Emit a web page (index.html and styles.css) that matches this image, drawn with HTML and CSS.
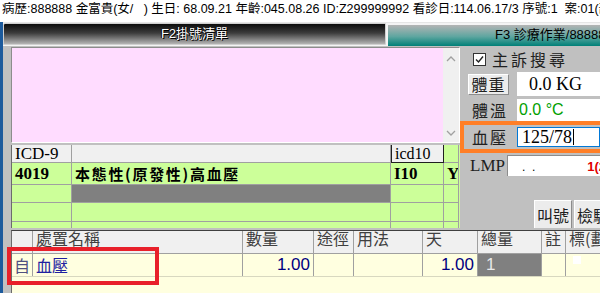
FILE: index.html
```html
<!DOCTYPE html>
<html lang="zh-Hant">
<head>
  <meta charset="UTF-8" />
  <title>診療作業</title>
  <link rel="stylesheet" href="styles.css">
</head>
<body>
  <div class="patient">病歷:888888 金富貴(女/   ) 生日: 68.09.21 年齡:045.08.26 ID:Z299999992 看診日:114.06.17/3 序號:1  案:01(部</div>

  <div class="frame">
    <div class="edge"></div>
    <div class="content">
      <div class="tabs">
        <div class="tab tab-dark">F2掛號清單</div>
        <div class="tab tab-teal">F3 診療作業/888888(</div>
      </div>

      <div class="work">
        <div class="upper">
          <div class="left-col">
            <div class="memo">
              <div class="memo-text"></div>
              <div class="scroll">
                <svg width="10" height="6" viewBox="0 0 10 6"><path d="M1 5 L5 1 L9 5" fill="none" stroke="#a0a0a0" stroke-width="1.3"/></svg>
                <svg width="10" height="6" viewBox="0 0 10 6"><path d="M1 1 L5 5 L9 1" fill="none" stroke="#a0a0a0" stroke-width="1.3"/></svg>
              </div>
            </div>

            <div class="icd">
              <div class="cell head">ICD-9</div>
              <div class="cell head"></div>
              <div class="cell head head-sel">icd10</div>
              <div class="cell"></div>

              <div class="cell code">4019</div>
              <div class="cell name">本態性(原發性)高血壓</div>
              <div class="cell code">I10</div>
              <div class="cell code">Y</div>

              <div class="cell"></div>
              <div class="cell dim"></div>
              <div class="cell"></div>
              <div class="cell"></div>

              <div class="cell"></div>
              <div class="cell"></div>
              <div class="cell"></div>
              <div class="cell"></div>

              <div class="cell last"></div>
              <div class="cell last"></div>
              <div class="cell last"></div>
              <div class="cell last"></div>
            </div>
          </div>

          <div class="side">
            <label class="search"><span class="check">
              <svg width="11" height="11" viewBox="0 0 11 11"><path d="M2 5.5 L4.5 8 L9 2.5" fill="none" stroke="#222" stroke-width="1.4"/></svg>
            </span>主訴搜尋</label>

            <div class="vital weight">
              <button class="vbtn">體重</button>
              <div class="field">0.0 KG</div>
            </div>
            <div class="vital temp">
              <span class="vlabel">體溫</span>
              <div class="field green">0.0 °C</div>
            </div>
            <div class="vital bp">
              <span class="vlabel">血壓</span>
              <div class="field focus">125/78<span class="caret"></span></div>
            </div>
            <div class="vital lmp">
              <span class="vlabel latin">LMP</span>
              <div class="field small"><span class="dots">.&nbsp;&nbsp;.</span><span class="red">1(2</span></div>
            </div>

            <div class="actions">
              <button class="act">叫號</button>
              <button class="act">檢驗</button>
            </div>
          </div>
        </div>

        <div class="orders">
          <div class="orow ohead">
            <div class="oc c0"></div>
            <div class="oc c1">處置名稱</div>
            <div class="oc c2">數量</div>
            <div class="oc c3">途徑</div>
            <div class="oc c4">用法</div>
            <div class="oc c5">天</div>
            <div class="oc c6">總量</div>
            <div class="oc c7">註</div>
            <div class="oc c8">標(劃</div>
          </div>
          <div class="orow odata">
            <div class="oc c0 self">自</div>
            <div class="oc c1 item">血壓</div>
            <div class="oc c2 num">1.00</div>
            <div class="oc c3"></div>
            <div class="oc c4"></div>
            <div class="oc c5 num">1.00</div>
            <div class="oc c6 total">1</div>
            <div class="oc c7"></div>
            <div class="oc c8"><span class="box"></span></div>
          </div>
        </div>
      </div>
    </div>
  </div>

  <div class="mark"></div>
</body>
</html>
```

FILE: styles.css
```css
body {
  margin: 0;
  width: 600px;
  height: 293px;
  overflow: hidden;
  background: #fff;
  font-family: "Liberation Sans", "Noto Sans CJK TC", sans-serif;
  position: relative;
}

.patient {
  height: 22px;
  padding-left: 2px;
  font-size: 12.5px;
  line-height: 19px;
  white-space: pre;
  overflow: hidden;
  color: #000;
}

.frame {
  display: flex;
  height: 271px;
}

.edge {
  width: 3px;
  background: #1c5a9c;
  flex: none;
}

.content {
  flex: 1;
  display: flex;
  flex-direction: column;
  min-width: 0;
}

/* tab strip */
.tabs {
  height: 24px;
  display: flex;
  align-items: flex-end;
  border-top: 1px solid #e6e6e6;
  box-sizing: border-box;
  background: #f4f4f4;
}

.tab {
  font-size: 13px;
  white-space: nowrap;
  overflow: hidden;
  box-sizing: border-box;
}

.tab-dark {
  width: 383px;
  height: 22px;
  margin-bottom: 1px;
  line-height: 20px;
  text-align: center;
  color: #fff;
  text-shadow: 1px 1px 0 #000, -1px 0 0 #000;
  background: linear-gradient(#0c0c0c, #3c3c3c 45%, #b4b4b4);
  border: 1px solid #d0d0d0;
  border-radius: 2px 0 0 0;
}

.tab-teal {
  flex: 1;
  margin-left: 2px;
  height: 21px;
  padding-left: 107px;
  line-height: 20px;
  color: #000;
  background: linear-gradient(#b4b4b4, #5ea6a0 55%, #008078);
}

/* working area */
.work {
  flex: 1;
  background: #c0c0c0;
  display: flex;
  flex-direction: column;
}

.upper {
  height: 184px;
  display: flex;
}

.left-col {
  width: 457px;
  padding: 1px 0 0 8px;
  box-sizing: border-box;
  display: flex;
  flex-direction: column;
  gap: 2px;
}

.memo {
  height: 96px;
  display: flex;
  border: 1px solid #8c8c8c;
  border-right-color: #fff;
  border-bottom-color: #fff;
  box-sizing: border-box;
}

.memo-text {
  flex: 1;
  background: #ffdcff;
}

.scroll {
  width: 16px;
  background: #f0f0f0;
  display: flex;
  flex-direction: column;
  justify-content: space-between;
  align-items: center;
  padding: 8px 0 6px;
  box-sizing: border-box;
}

/* diagnosis grid */
.icd {
  display: grid;
  grid-template-columns: 60px 319px 53px 15px;
  grid-template-rows: 18px 22px 18px 19px 6px;
  border-left: 1px solid #6c6c6c;
  background: #ccff99;
}

.cell {
  border-right: 1px solid #a0a0a0;
  border-bottom: 1px solid #a0a0a0;
  font-family: "Liberation Serif", "Noto Sans CJK TC", serif;
  font-size: 17px;
  line-height: 19px;
  padding-left: 3px;
  overflow: hidden;
  white-space: nowrap;
  color: #000;
}

.cell.last {
  border-bottom: none;
}

.head {
  background: #f0f0f0;
  line-height: 17px;
}

.head-sel {
  border: 1px solid #202020;
  border-top: none;
  font-size: 16px;
}

.code {
  font-weight: bold;
  line-height: 22px;
}

.name {
  font-family: "Noto Sans CJK TC", sans-serif;
  font-weight: bold;
  font-size: 15px;
  letter-spacing: 1.7px;
  line-height: 21px;
}

.dim {
  background: #808080;
}

/* vitals side panel */
.side {
  flex: 1;
  padding-top: 6px;
  display: flex;
  flex-direction: column;
  font-family: "Noto Sans CJK TC", sans-serif;
}

.search {
  display: flex;
  align-items: center;
  gap: 6px;
  margin-left: 13px;
  height: 14px;
  font-size: 16px;
  letter-spacing: 3px;
  color: #202020;
}

.check {
  width: 13px;
  height: 13px;
  background: #fff;
  border: 1px solid #333;
  box-sizing: border-box;
  display: flex;
  align-items: center;
  justify-content: center;
}

.vital {
  display: flex;
  align-items: center;
}

.vlabel {
  width: 45px;
  padding-left: 12px;
  font-size: 16px;
  letter-spacing: 2px;
  color: #202020;
  flex: none;
}

.vlabel.latin {
  width: 37px;
  padding-left: 10px;
  font-family: "Liberation Serif", serif;
  font-size: 17px;
  letter-spacing: 0;
}

.field {
  flex: 1;
  background: #fff;
  font-family: "Liberation Serif", serif;
  font-size: 18px;
  padding-left: 12px;
  white-space: nowrap;
  overflow: hidden;
  box-sizing: border-box;
}

.weight {
  margin-top: 6px;
  height: 24px;
}

.weight .field {
  height: 24px;
  line-height: 24px;
}

.vbtn {
  width: 41px;
  height: 21px;
  margin: 0 8px 0 8px;
  padding: 0;
  background: #ececec;
  border: 1px solid #fff;
  border-right-color: #8c8c8c;
  border-bottom-color: #8c8c8c;
  font-family: "Noto Sans CJK TC", sans-serif;
  font-size: 16px;
  letter-spacing: 1px;
  line-height: 18px;
  color: #202020;
}

.temp {
  margin-top: 3px;
  height: 22px;
}

.temp .field {
  height: 22px;
  line-height: 22px;
  padding-left: 2px;
  font-family: "Liberation Sans", sans-serif;
  font-size: 16px;
}

.green {
  color: #00a000;
}

.bp {
  height: 32px;
  margin-right: -6px;
  border: 4px solid #ff7f27;
  box-sizing: border-box;
}

.bp .vlabel {
  width: 45px;
  padding-left: 8px;
}

.bp .field {
  height: 20px;
  line-height: 18px;
  padding-left: 4px;
  margin-right: 2px;
  border: 1px solid #0078d7;
}

.caret {
  display: inline-block;
  width: 1px;
  height: 16px;
  margin-left: 1px;
  background: #000;
  vertical-align: -2px;
}

.lmp {
  margin-top: 2px;
  height: 21px;
}

.field.small {
  height: 21px;
  line-height: 16px;
  padding-left: 14px;
  border-top: 1px solid #8c8c8c;
  border-left: 1px solid #8c8c8c;
  font-size: 16px;
  display: flex;
  justify-content: space-between;
}

.dots {
  font-family: "Liberation Sans", sans-serif;
  font-size: 12px;
  line-height: 22px;
}

.red {
  color: #e00000;
  font-family: "Liberation Sans", sans-serif;
  font-weight: bold;
  font-size: 13px;
  line-height: 22px;
  margin-right: -6px;
}

.actions {
  margin-top: auto;
  margin-bottom: 2px;
  display: flex;
  justify-content: flex-end;
  gap: 2px;
  margin-right: -12px;
}

.act {
  height: 28px;
  padding: 0 2px;
  background: #ececec;
  border: 1px solid #fff;
  border-right-color: #8c8c8c;
  border-bottom: none;
  font-family: "Noto Sans CJK TC", sans-serif;
  font-size: 16px;
  color: #202020;
}

/* order list */
.orders {
  flex: 1;
  margin-left: 8px;
  background: #ffffe0;
  border-top: 1px solid #404040;
  border-left: 1px solid #6c6c6c;
}

.orow {
  display: flex;
}

.ohead {
  height: 22px;
  background: #f0f0f0;
  border-bottom: 1px solid #a0a0a0;
  font-family: "Noto Sans CJK TC", sans-serif;
  font-size: 16px;
  line-height: 14px;
  color: #404040;
}

.odata {
  height: 22px;
  border-bottom: 1px solid #d8d8c0;
  line-height: 22px;
}

.oc {
  border-right: 1px solid #a0a0a0;
  box-sizing: border-box;
  padding-left: 3px;
  white-space: nowrap;
  overflow: hidden;
  flex: none;
}

.c0 { width: 21px; }
.c1 { width: 210px; }
.c2 { width: 71px; }
.c3 { width: 40px; }
.c4 { width: 69px; }
.c5 { width: 55px; }
.c6 { width: 64px; }
.c7 { width: 24px; }
.c8 { width: 40px; border-right: none; }

.self {
  font-family: "Noto Sans CJK TC", sans-serif;
  font-size: 16px;
  color: #505080;
  padding-left: 2px;
}

.item {
  font-family: "Noto Sans CJK TC", sans-serif;
  font-size: 16px;
  color: #2020a0;
}

.num {
  text-align: right;
  padding-right: 3px;
  font-size: 17px;
  color: #000080;
}

.total {
  background: #808080;
  color: #e8e8e8;
  font-size: 17px;
  padding-left: 8px;
}

.box {
  display: inline-block;
  width: 8px;
  height: 8px;
  margin: 2px 0 0 4px;
  background: #fff;
  vertical-align: top;
}

/* highlight annotation over the order row */
.mark {
  position: absolute;
  left: 7px;
  top: 247px;
  width: 152px;
  height: 38px;
  border: 4px solid #e8202a;
  box-sizing: border-box;
}
```
